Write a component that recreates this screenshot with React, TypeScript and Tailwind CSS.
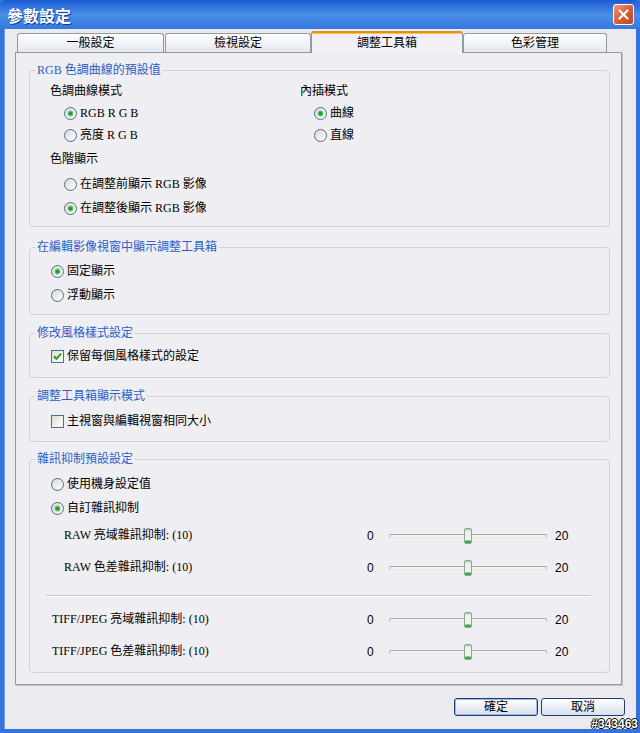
import React from "react";

const FONT = "[font-family:'Liberation_Serif','Noto_Sans_CJK_TC',serif]";
const SANS = "[font-family:'Liberation_Sans','Noto_Sans_CJK_TC',sans-serif]";

function Radio({ checked = false }: { checked?: boolean }) {
  return (
    <svg width="13" height="13" viewBox="0 0 13 13" className="shrink-0">
      <defs>
        <linearGradient id="radioFill" x1="0" y1="0" x2="1" y2="1">
          <stop offset="0" stopColor="#d9d9d3" />
          <stop offset="1" stopColor="#ffffff" />
        </linearGradient>
      </defs>
      <circle cx="6.5" cy="6.5" r="6" fill="url(#radioFill)" stroke="#4d6d94" />
      {checked && (
        <>
          <circle cx="6.5" cy="6.5" r="2.9" fill="#62c862" />
          <circle cx="6.5" cy="6.5" r="1.7" fill="#1f9a27" />
        </>
      )}
    </svg>
  );
}

function Checkbox({ checked = false }: { checked?: boolean }) {
  return (
    <svg width="13" height="13" viewBox="0 0 13 13" className="shrink-0">
      <defs>
        <linearGradient id="checkFill" x1="0" y1="0" x2="1" y2="1">
          <stop offset="0" stopColor="#dcdcd6" />
          <stop offset="1" stopColor="#ffffff" />
        </linearGradient>
      </defs>
      <rect x="0.5" y="0.5" width="12" height="12" fill="url(#checkFill)" stroke="#4d6d94" />
      {checked && <path d="M3 6.2 L5.4 8.8 L10 3.6" fill="none" stroke="#21a121" strokeWidth="2" />}
    </svg>
  );
}

function Thumb() {
  return (
    <svg width="8" height="16" viewBox="0 0 8 16" className="absolute left-[89px] top-[1px]">
      <rect x="0.5" y="0.5" width="7" height="15" rx="1.5" fill="#f1f1ec" stroke="#86a893" />
      <rect x="1" y="1" width="6" height="1.5" fill="#9fd6a4" />
      <rect x="1" y="12.5" width="6" height="2.5" rx="1" fill="#3aa549" />
    </svg>
  );
}

function RadioRow({ label, checked, h }: { label: string; checked?: boolean; h: string }) {
  return (
    <div className={`flex items-center gap-[3px] ${h}`}>
      <Radio checked={checked} />
      <span>{label}</span>
    </div>
  );
}

function CheckRow({ label, checked }: { label: string; checked?: boolean }) {
  return (
    <div className="flex h-[24px] items-center gap-[3px] pl-[21px]">
      <Checkbox checked={checked} />
      <span>{label}</span>
    </div>
  );
}

function Group({ title, className, children }: { title: string; className: string; children: React.ReactNode }) {
  return (
    <fieldset className={`w-[581px] rounded-[4px] border border-[#d3d2da] ${className}`}>
      <legend className="ml-[5px] px-[2px] text-[12px] leading-[16px] text-[#2c5fc6]">{title}</legend>
      {children}
    </fieldset>
  );
}

function NoiseRow({ label, indent }: { label: string; indent: string }) {
  return (
    <div className="flex h-[32px] items-center">
      <div className={`w-[337px] pb-[3px] ${indent}`}>{label}</div>
      <span className={`w-[8px] ${SANS}`}>0</span>
      <div className="relative flex h-[18px] w-[180px] items-center pl-[14px] pr-[8px]">
        <div className="h-[4px] w-full rounded-full border border-[#a9a9a9] border-b-[#e6e6e6] bg-[#f3f3ef]" />
        <Thumb />
      </div>
      <span className={SANS}>20</span>
    </div>
  );
}

const tabs = [
  { label: "一般設定", w: "w-[147px]" },
  { label: "檢視設定", w: "ml-[1px] w-[146px]" },
];

export default function App() {
  return (
    <div className={`relative flex h-[733px] w-[640px] flex-col bg-[#3672dc] text-[12px] leading-[16px] text-black ${FONT}`}>
      {/* title bar */}
      <div className="flex h-[29px] shrink-0 items-center justify-between rounded-t-[6px] bg-linear-to-b from-[#1a5cd0] via-[#4a8ce8] to-[#3479de] pl-[7px] pr-[6px]">
        <span className="text-[16px] font-bold text-white [font-family:'Noto_Sans_CJK_TC',sans-serif] [text-shadow:1px_1px_0_#0a3a9a]">
          參數設定
        </span>
        <button className="grid h-[21px] w-[21px] place-items-center rounded-[3px] border border-white bg-linear-to-br from-[#ee9a7a] via-[#dc5e36] to-[#c2441c]">
          <svg width="11" height="11" viewBox="0 0 11 11">
            <path d="M1.5 1.5 L9.5 9.5 M9.5 1.5 L1.5 9.5" stroke="#fff" strokeWidth="2.2" strokeLinecap="round" />
          </svg>
        </button>
      </div>

      {/* body */}
      <div className="mx-[4px] mb-[4px] flex flex-1 flex-col border-l border-[#6b9ce8] bg-[#ebeaef] pl-[10px] pt-[2px]">
        {/* tabs */}
        <div className="ml-[2px] flex items-end">
          {tabs.map((t) => (
            <div
              key={t.label}
              className={`flex h-[19px] items-center justify-center rounded-t-[3px] border border-b-0 border-[#919b9c] bg-linear-to-b from-white to-[#e2e7f1] ${t.w}`}
            >
              {t.label}
            </div>
          ))}
          <div className="relative z-10 -mb-px flex h-[22px] w-[152px] items-center justify-center rounded-t-[3px] border border-b-0 border-[#919b9c] border-t-2 border-t-[#e68b2c] bg-[#f1f0f4] shadow-[inset_0_1px_0_#ffc83c]">
            調整工具箱
          </div>
          <div className="flex h-[19px] w-[144px] items-center justify-center rounded-t-[3px] border border-b-0 border-[#919b9c] bg-linear-to-b from-white to-[#e2e7f1]">
            色彩管理
          </div>
        </div>

        {/* tab panel */}
        <div className="h-[633px] w-[607px] border border-[#919b9c] bg-[#efeef3] pl-[13px] pt-[9px] shadow-[1px_1px_0_#c4c7d0]">
          <Group title="RGB 色調曲線的預設值" className="h-[165px]">
            <div className="grid grid-cols-[250px_1fr] pl-[20px] pt-[2px]">
              <div>
                <div className="flex h-[22px] items-center">色調曲線模式</div>
                <div className="pl-[14px]">
                  <RadioRow label="RGB R G B" checked h="h-[22px]" />
                  <RadioRow label="亮度 R G B" h="h-[22px]" />
                </div>
                <div className="flex h-[26px] items-center">色階顯示</div>
                <div className="pl-[14px]">
                  <RadioRow label="在調整前顯示 RGB 影像" h="h-[24px]" />
                  <RadioRow label="在調整後顯示 RGB 影像" checked h="h-[24px]" />
                </div>
              </div>
              <div>
                <div className="flex h-[22px] items-center">內插模式</div>
                <div className="pl-[14px]">
                  <RadioRow label="曲線" checked h="h-[22px]" />
                  <RadioRow label="直線" h="h-[22px]" />
                </div>
              </div>
            </div>
          </Group>

          <Group title="在編輯影像視窗中顯示調整工具箱" className="mt-[12px] h-[76px]">
            <div className="pl-[21px] pt-[4px]">
              <RadioRow label="固定顯示" checked h="h-[24px]" />
              <RadioRow label="浮動顯示" h="h-[24px]" />
            </div>
          </Group>

          <Group title="修改風格樣式設定" className="mt-[10px] h-[53px]">
            <div className="pt-[3px]">
              <CheckRow label="保留每個風格樣式的設定" checked />
            </div>
          </Group>

          <Group title="調整工具箱顯示模式" className="mt-[10px] h-[54px]">
            <div className="pt-[5px]">
              <CheckRow label="主視窗與編輯視窗相同大小" />
            </div>
          </Group>

          <Group title="雜訊抑制預設設定" className="mt-[9px] h-[222px]">
            <div className="pt-[5px]">
              <div className="pl-[21px]">
                <RadioRow label="使用機身設定值" h="h-[24px]" />
                <RadioRow label="自訂雜訊抑制" checked h="h-[24px]" />
              </div>
              <NoiseRow label="RAW 亮域雜訊抑制: (10)" indent="pl-[34px]" />
              <NoiseRow label="RAW 色差雜訊抑制: (10)" indent="pl-[34px]" />
              <div className="ml-[16px] mr-[18px] mb-[8px] mt-[11px] h-px bg-[#c9c9cf] shadow-[0_1px_0_#ffffff]" />
              <NoiseRow label="TIFF/JPEG 亮域雜訊抑制: (10)" indent="pl-[22px]" />
              <NoiseRow label="TIFF/JPEG 色差雜訊抑制: (10)" indent="pl-[22px]" />
            </div>
          </Group>
        </div>

        {/* buttons */}
        <div className="mt-[13px] flex justify-end gap-[3px] pr-[11px]">
          <button className="h-[18px] w-[84px] rounded-[3px] border border-[#1f3d72] bg-linear-to-b from-white to-[#d9dfec] shadow-[inset_0_0_0_1px_#9ab9ea]">
            確定
          </button>
          <button className="h-[18px] w-[84px] rounded-[3px] border border-[#1f3d72] bg-linear-to-b from-white to-[#d9dfec]">
            取消
          </button>
        </div>
      </div>

      <span className={`absolute bottom-[2px] right-[2px] text-[12px] font-bold leading-[14px] text-white ${SANS} [text-shadow:1px_0_0_#000,-1px_0_0_#000,0_1px_0_#000,0_-1px_0_#000]`}>
        #343463
      </span>
    </div>
  );
}
